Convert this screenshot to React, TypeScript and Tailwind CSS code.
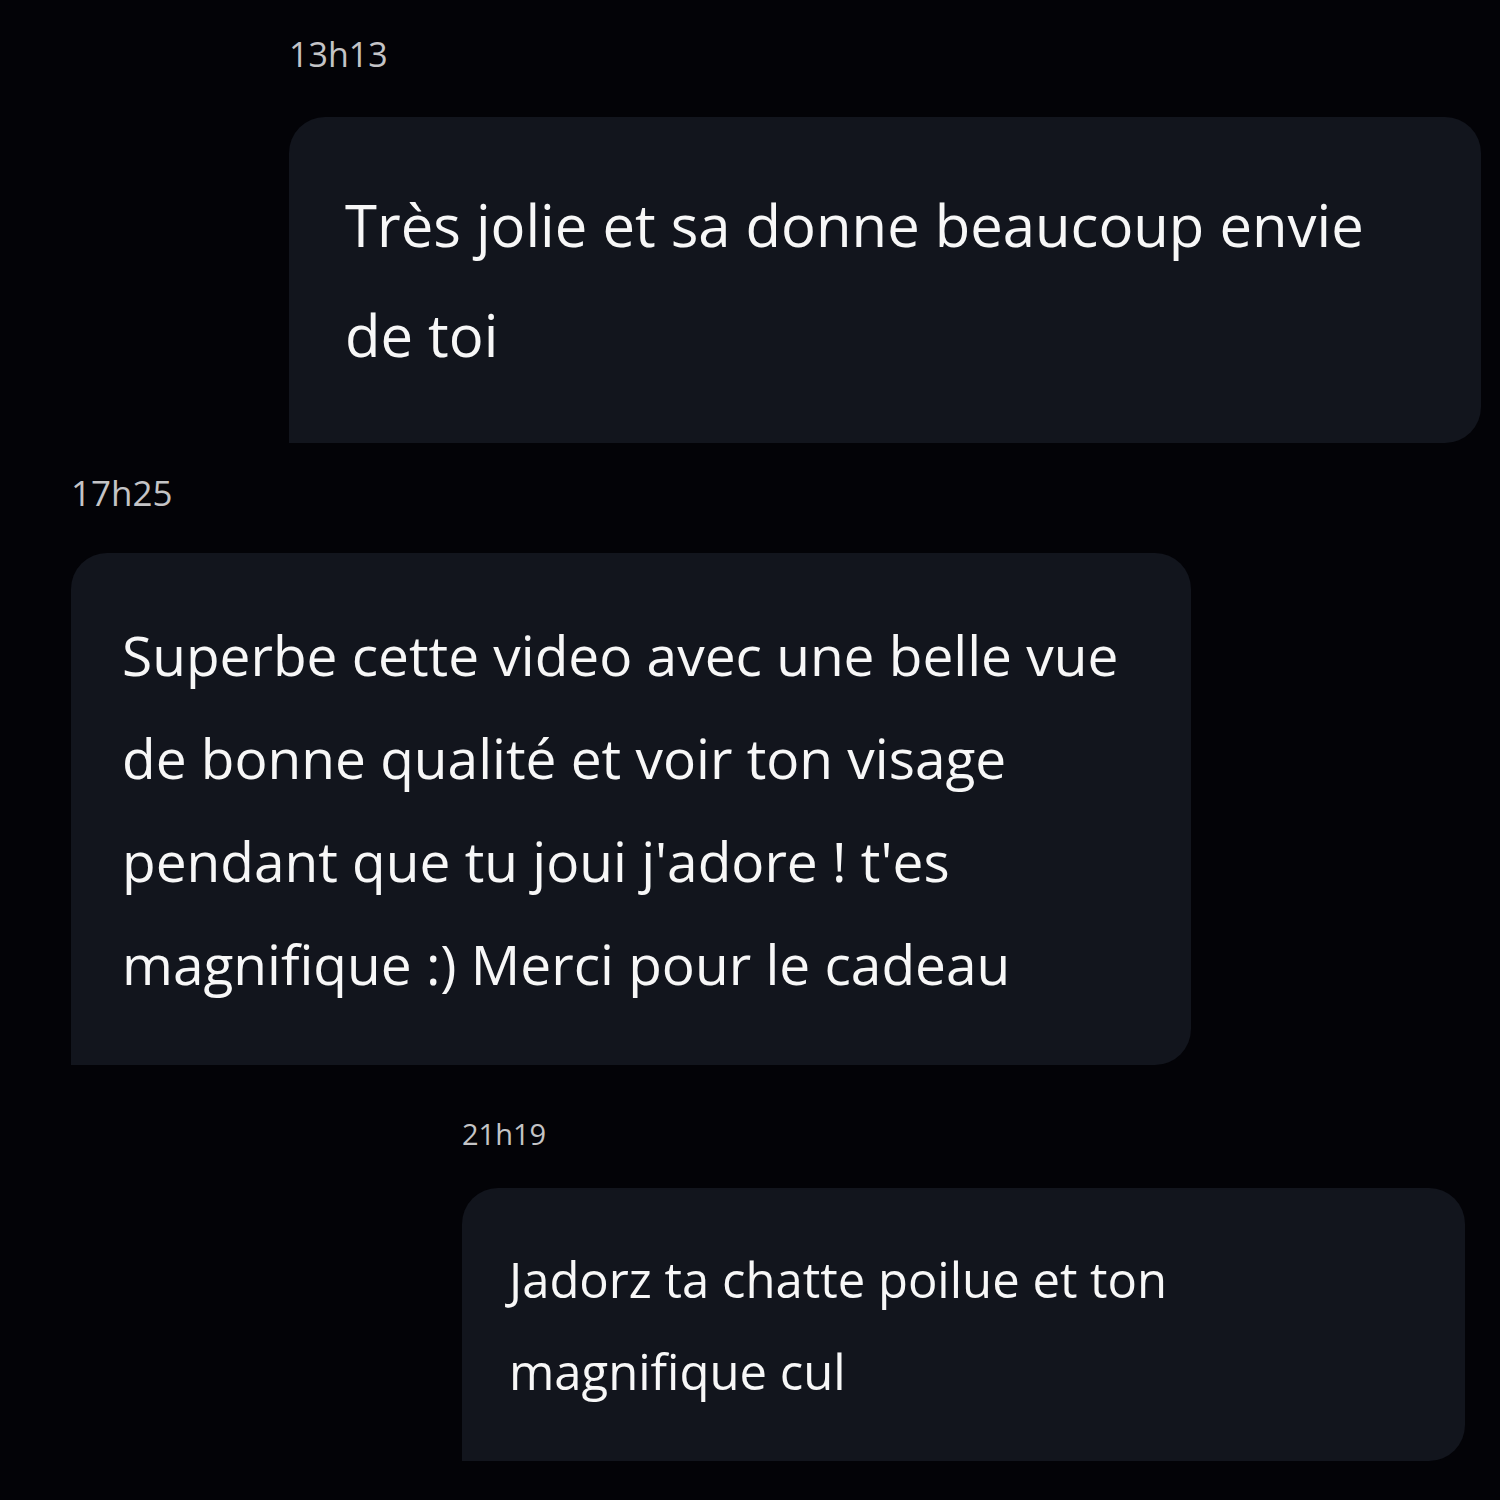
const messages = [
  {
    time: "13h13",
    timeClass: "ml-[289px] mt-[32px] text-[34px]",
    bubbleClass:
      "ml-[289px] mt-[41px] h-[326px] w-[1192px] pl-[56px] text-[58px] leading-[110px]",
    lines: ["Très jolie et sa donne beaucoup envie", "de toi"],
  },
  {
    time: "17h25",
    timeClass: "ml-[71px] mt-[28px] text-[35px]",
    bubbleClass:
      "ml-[71px] mt-[38px] h-[512px] w-[1120px] pl-[51px] text-[55px] leading-[103px]",
    lines: [
      "Superbe cette video avec une belle vue",
      "de bonne qualité et voir ton visage",
      "pendant que tu joui j'adore ! t'es",
      "magnifique :) Merci pour le cadeau",
    ],
  },
  {
    time: "21h19",
    timeClass: "ml-[462px] mt-[47px] text-[29px]",
    bubbleClass:
      "ml-[462px] mt-[32px] h-[273px] w-[1003px] pl-[47px] text-[49px] leading-[92px]",
    lines: ["Jadorz ta chatte poilue et ton", "magnifique cul"],
  },
];

export default function App() {
  return (
    <div className="flex min-h-[1500px] w-[1500px] flex-col bg-[#030307] font-['Open_Sans',sans-serif]">
      {messages.map((m) => (
        <div key={m.time} className="flex flex-col">
          <span className={`leading-[44px] text-[#c4c4c6] ${m.timeClass}`}>
            {m.time}
          </span>
          <div
            className={`flex flex-col justify-center rounded-[36px] rounded-bl-none bg-[#12151d] text-[#f7f7f7] ${m.bubbleClass}`}
          >
            {m.lines.map((line) => (
              <span key={line} className="block whitespace-nowrap">
                {line}
              </span>
            ))}
          </div>
        </div>
      ))}
    </div>
  );
}
